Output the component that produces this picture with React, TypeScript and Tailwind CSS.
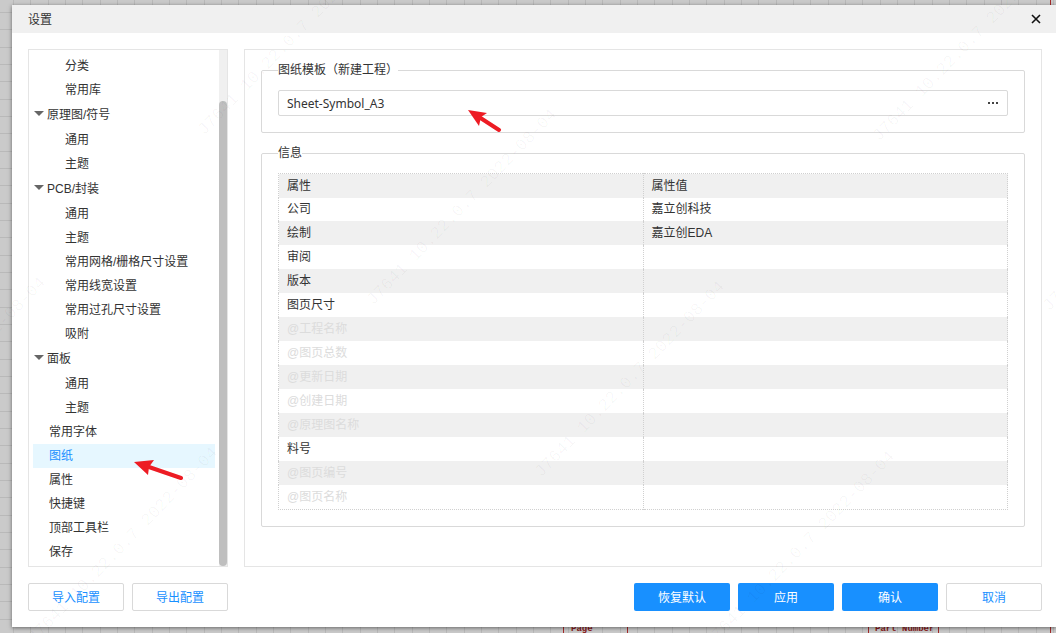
import React from "react";

type MenuItem = {
  label: string;
  kind: "group" | "child" | "top";
  active?: boolean;
};

const menu: MenuItem[] = [
  { label: "分类", kind: "child" },
  { label: "常用库", kind: "child" },
  { label: "原理图/符号", kind: "group" },
  { label: "通用", kind: "child" },
  { label: "主题", kind: "child" },
  { label: "PCB/封装", kind: "group" },
  { label: "通用", kind: "child" },
  { label: "主题", kind: "child" },
  { label: "常用网格/栅格尺寸设置", kind: "child" },
  { label: "常用线宽设置", kind: "child" },
  { label: "常用过孔尺寸设置", kind: "child" },
  { label: "吸附", kind: "child" },
  { label: "面板", kind: "group" },
  { label: "通用", kind: "child" },
  { label: "主题", kind: "child" },
  { label: "常用字体", kind: "top" },
  { label: "图纸", kind: "top", active: true },
  { label: "属性", kind: "top" },
  { label: "快捷键", kind: "top" },
  { label: "顶部工具栏", kind: "top" },
  { label: "保存", kind: "top" },
];

const rows = [
  { name: "公司", value: "嘉立创科技" },
  { name: "绘制", value: "嘉立创EDA" },
  { name: "审阅", value: "" },
  { name: "版本", value: "" },
  { name: "图页尺寸", value: "" },
  { name: "@工程名称", value: "" },
  { name: "@图页总数", value: "" },
  { name: "@更新日期", value: "" },
  { name: "@创建日期", value: "" },
  { name: "@原理图名称", value: "" },
  { name: "料号", value: "" },
  { name: "@图页编号", value: "" },
  { name: "@图页名称", value: "" },
];

const watermarks = [
  [-138, 474],
  [34, 644],
  [204, 136],
  [373, 306],
  [541, 478],
  [711, 648],
  [879, 142],
  [1049, 312],
];

// Schematic canvas behind the dialog
const Canvas = () => (
  <svg className="absolute inset-0 h-full w-full" aria-hidden="true">
    <defs>
      <pattern id="grid" x="13" y="12" width="52" height="52" patternUnits="userSpaceOnUse">
        <rect width="52" height="52" fill="#cacaca" />
        <path d="M0.5 0V52M17.5 0V52M35.5 0V52M0 0.5H52M0 17.5H52M0 35.5H52" stroke="#b9b9b9" />
      </pattern>
    </defs>
    <rect width="100%" height="100%" fill="url(#grid)" />
    <path d="M563.5 620V633M627.5 620V633M868.5 620V633M938.5 620V633M1050.5 0V633" stroke="#a52a2a" />
    <g fill="#8b1a1a" fontSize="9" fontWeight="bold" fontFamily="'Liberation Mono', monospace">
      <text x="571" y="631">Page</text>
      <text x="875" y="631">Part Number</text>
    </g>
  </svg>
);

const Watermark = () => (
  <svg className="pointer-events-none absolute inset-0 h-full w-full" aria-hidden="true">
    <g fill="#000" fillOpacity="0.035" fontSize="17" fontFamily="'Liberation Mono', monospace">
      {watermarks.map(([x, y]) => (
        <text key={`${x}-${y}`} transform={`translate(${x} ${y}) rotate(-46)`}>
          J7641 10.22.0.7 2022-08-04
        </text>
      ))}
    </g>
  </svg>
);

const Arrows = () => (
  <svg className="pointer-events-none absolute inset-0 h-full w-full" aria-hidden="true">
    <g fill="#ed1c24">
      <path d="M468 110L487 113L481 117L479 126Z" />
      <path d="M134 462L154 460L149 467L148 475Z" />
    </g>
    <path
      d="M479 117L499 130M146 466L181 478"
      stroke="#ed1c24"
      strokeWidth="4"
      strokeLinecap="round"
      fill="none"
    />
  </svg>
);

const Sidebar = () => (
  <nav className="flex w-[200px] shrink-0 border border-[#e5e5e5]">
    <ul className="flex-1 px-1 pt-1 pb-0.5">
      {menu.map((item, index) => {
        if (item.kind === "group") {
          return (
            <li key={index}>
              <button type="button" className="flex h-[26px] w-full items-center gap-[3px] pl-px text-left">
                <svg width="10" height="6" viewBox="0 0 10 6" className="mb-0.5" aria-hidden="true">
                  <path d="M0 0H10L5 5Z" fill="#666" />
                </svg>
                {item.label}
              </button>
            </li>
          );
        }
        return (
          <li key={index}>
            <a
              href="#"
              className={`flex h-6 items-center ${item.kind === "child" ? "pl-8" : "pl-4"} ${
                item.active ? "bg-[#e6f7ff] text-[#1890ff]" : ""
              }`}
            >
              {item.label}
            </a>
          </li>
        );
      })}
    </ul>
    <div className="flex w-2 flex-col bg-[#f0f0f0] pt-[51px]">
      <div className="flex-1 rounded-full bg-[#bfbfbf]" />
    </div>
  </nav>
);

const TemplateField = () => (
  <fieldset className="rounded-xs border border-[#d9d9d9] px-4 pt-2.5 pb-4">
    <legend className="leading-5">
      <label htmlFor="template">图纸模板（新建工程）</label>
    </legend>
    <div className="flex h-[26px] items-center rounded-xs border border-[#d9d9d9] pr-2">
      <input
        id="template"
        type="text"
        defaultValue="Sheet-Symbol_A3"
        className="h-full min-w-0 flex-1 px-2 font-['Noto_Sans','Noto_Sans_CJK_SC',sans-serif] outline-none"
      />
      <button type="button" aria-label="选择模板" className="flex h-full w-3 items-center justify-center">
        <svg width="10" height="2" viewBox="0 0 10 2" aria-hidden="true">
          <path d="M0 0H2V2H0ZM4 0H6V2H4ZM8 0H10V2H8Z" fill="#444" />
        </svg>
      </button>
    </div>
  </fieldset>
);

const InfoTable = () => (
  <fieldset className="mt-2.5 rounded-xs border border-[#d9d9d9] px-4 pt-2.5 pb-4">
    <legend className="leading-5">信息</legend>
    <table className="w-full table-fixed border-collapse border border-dotted border-[#d0d0d0] text-left">
      <thead>
        <tr className="h-6 bg-[#f0f0f0]">
          <th className="border-r border-dotted border-[#d0d0d0] px-2 font-normal">属性</th>
          <th className="px-2 font-normal">属性值</th>
        </tr>
      </thead>
      <tbody>
        {rows.map((row) => (
          <tr key={row.name} className="h-6 first:h-[23px] last:h-[25px] even:bg-[#f0f0f0]">
            <td
              className={`border-r border-dotted border-[#d0d0d0] px-2 ${
                row.name.startsWith("@") ? "text-[#dcdcdc]" : ""
              }`}
            >
              {row.name}
            </td>
            <td className="px-2">{row.value}</td>
          </tr>
        ))}
      </tbody>
    </table>
  </fieldset>
);

const plainButton = "h-7 w-24 rounded-xs border border-[#d9d9d9] bg-white pt-0.5 text-[#1890ff]";
const primaryButton = "h-7 w-24 rounded-xs bg-[#1890ff] pt-0.5 text-white";

export default function App() {
  return (
    <div className="relative min-h-screen overflow-hidden pt-[5px] pl-3 font-['Liberation_Sans','Noto_Sans_CJK_SC',sans-serif] text-xs text-[#333]">
      <Canvas />
      <section
        role="dialog"
        aria-labelledby="dialog-title"
        className="relative bg-white shadow-[0_1px_4px_rgba(0,0,0,0.5)]"
      >
        <header className="flex h-7 items-center justify-between bg-[#f0f0f0] pr-3.5 pl-4">
          <h1 id="dialog-title" className="pt-0.5">设置</h1>
          <button type="button" aria-label="关闭" className="flex h-5 w-3 items-center justify-center">
            <svg width="10" height="10" viewBox="0 0 10 10" aria-hidden="true">
              <path d="M1 1L9 9M9 1L1 9" stroke="#111" strokeWidth="1.6" />
            </svg>
          </button>
        </header>
        <div className="flex gap-4 pt-4 pr-3.5 pl-4">
          <Sidebar />
          <main className="min-w-0 flex-1 border border-[#e5e5e5] px-4 pt-2.5">
            <TemplateField />
            <InfoTable />
          </main>
        </div>
        <footer className="flex gap-2 py-4 pr-3.5 pl-4">
          <button type="button" className={plainButton}>导入配置</button>
          <button type="button" className={plainButton}>导出配置</button>
          <button type="button" className={`${primaryButton} ml-auto`}>恢复默认</button>
          <button type="button" className={primaryButton}>应用</button>
          <button type="button" className={primaryButton}>确认</button>
          <button type="button" className={plainButton}>取消</button>
        </footer>
      </section>
      <Watermark />
      <Arrows />
    </div>
  );
}
